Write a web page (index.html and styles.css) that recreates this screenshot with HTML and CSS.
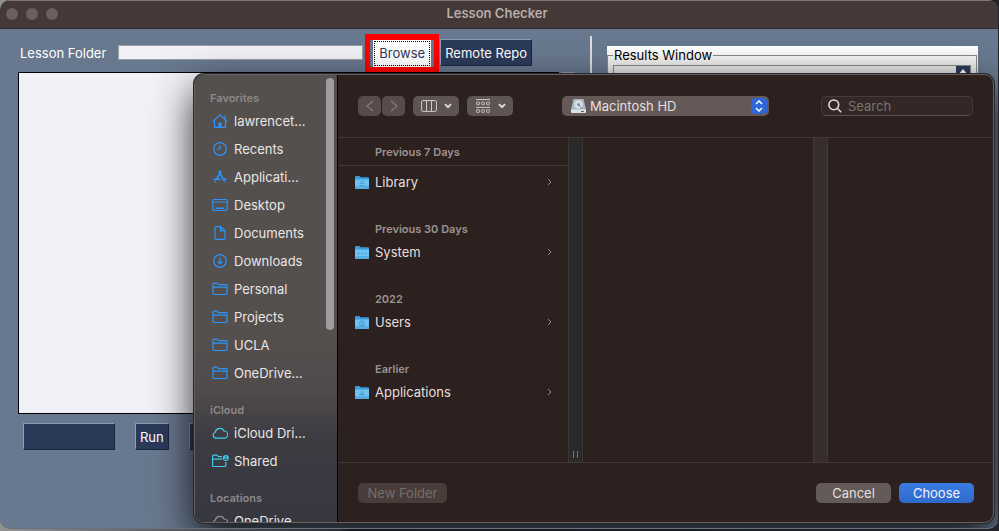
FILE: index.html
```html
<!DOCTYPE html>
<html lang="en">
<head>
<meta charset="utf-8">
<title>Lesson Checker</title>
<link rel="stylesheet" href="styles.css">
</head>
<body>
<svg class="sprite" aria-hidden="true">
  <symbol id="folder" viewBox="0 0 16 14"><path d="M1 11.5V2.2Q1 1.2 2 1.2h3l1.4 1.4H14q1 0 1 1v7.9q0 1-1 1H2q-1 0-1-1ZM1 5.2h14"/></symbol>
  <symbol id="cloud" viewBox="0 0 16 14"><path d="M3.8 12.2a3.1 3.1 0 0 1-.5-6A4.6 4.6 0 0 1 12 5a3.6 3.6 0 0 1 .3 7.2Z"/></symbol>
  <symbol id="blue-folder" viewBox="0 0 14 13"><path fill="#3a9bd8" d="M0 1q0-1 1-1h3.5l1.3 1.2H13q1 0 1 1V12H0Z"/><path fill="#6fc3f3" d="M0 3.4h14V12q0 1-1 1H1q-1 0-1-1Z"/><path fill="#55ade3" d="M0 10h14v2q0 1-1 1H1q-1 0-1-1Z"/></symbol>
</svg>

<div class="window">
  <header class="titlebar">
    <span class="lights"><i></i><i></i><i></i></span>
    <h1>Lesson Checker</h1>
  </header>

  <main class="app">
    <section class="lesson">
      <div class="path-row">
        <label for="path">Lesson Folder</label>
        <input id="path" class="path" type="text">
        <span class="highlight"><button class="tk browse" type="button">Browse</button></span>
        <button class="tk" type="button">Remote Repo</button>
      </div>
      <div class="list-row">
        <div class="list"></div>
        <div class="list-scroll"></div>
      </div>
      <div class="run-row">
        <button class="tk blank" type="button" aria-label="Status"></button>
        <button class="tk" type="button">Run</button>
        <button class="tk blank" type="button" aria-label="Clear"></button>
      </div>
    </section>
    <div class="separator"></div>
    <section class="results">
      <fieldset>
        <legend>Results Window</legend>
        <div class="output"><span class="output-up"><svg viewBox="0 0 10 6"><path d="M0 6 5 0l5 6Z"/></svg></span></div>
      </fieldset>
    </section>
  </main>

  <div class="dialog" role="dialog" aria-label="Choose folder">
    <nav class="sidebar">
      <div class="places">
        <h2>Favorites</h2>
        <a href="#"><svg viewBox="0 0 16 14"><path d="M.6 7.6 8 .9l7.4 6.7M2.5 6v7.4h11V6M12.8 5V1.8"/><path class="solid" d="M6.5 8.5h3v5h-3Z"/></svg>lawrencet...</a>
        <a href="#"><svg viewBox="0 0 16 14"><circle cx="8" cy="7" r="6.3"/><path d="M8 3.2V7H4.8"/></svg>Recents</a>
        <a href="#"><svg viewBox="0 0 16 14"><path class="bold" d="M9.2 1 4.6 9M6.8 1l5.9 10.8M1.4 9.2h7.4M11.6 9.2h3M3.6 10.8l-.8 1.6"/></svg>Applicati...</a>
        <a href="#"><svg viewBox="0 0 16 14"><rect x=".8" y="1.5" width="14.4" height="11" rx="1.2"/><path d="M1 4h14"/><path class="bold" d="M3.5 10.2h9"/></svg>Desktop</a>
        <a href="#"><svg viewBox="0 0 16 14"><path d="M3 1.7q0-1 1-1h4.7l4.3 4v7.6q0 1-1 1H4q-1 0-1-1ZM8.5.8v4.1H13"/></svg>Documents</a>
        <a href="#"><svg viewBox="0 0 16 14"><circle cx="8" cy="7" r="6.3"/><path d="M8 3.5v6.3M5.6 7.6 8 10l2.4-2.4"/></svg>Downloads</a>
        <a href="#"><svg><use href="#folder"/></svg>Personal</a>
        <a href="#"><svg><use href="#folder"/></svg>Projects</a>
        <a href="#"><svg><use href="#folder"/></svg>UCLA</a>
        <a href="#"><svg><use href="#folder"/></svg>OneDrive...</a>
        <h2>iCloud</h2>
        <a href="#" class="cyan"><svg><use href="#cloud"/></svg>iCloud Dri...</a>
        <a href="#" class="cyan"><svg viewBox="0 0 16 14"><path d="M10 2.6H6.4L5 1.2H1.5q-.9 0-.9 1v9.3q0 1 1 1h11.2q1 0 1-1V8M.6 5.2h9.6"/><circle class="solid" cx="13.8" cy="4" r="3"/><path class="cut" d="M13.8 2.2v1.2M12.4 5.2h2.8"/></svg>Shared</a>
        <h2>Locations</h2>
        <a href="#" class="gray"><svg><use href="#cloud"/></svg>OneDrive</a>
      </div>
      <div class="thumb"></div>
    </nav>

    <div class="browser">
      <div class="toolbar">
        <button type="button" class="tool nav" aria-label="Back"><svg class="arrow" viewBox="0 0 8 12"><path d="M7 1 1 6l6 5"/></svg></button>
        <button type="button" class="tool nav" aria-label="Forward"><svg class="arrow" viewBox="0 0 8 12"><path d="m1 1 6 5-6 5"/></svg></button>
        <button type="button" class="tool view" aria-label="Column view"><svg class="glyph" viewBox="0 0 16 12"><rect x=".6" y=".6" width="14.8" height="10.8" rx="1.2"/><path d="M5.5.6v10.8M10.5.6v10.8"/></svg><svg class="down" viewBox="0 0 8 6"><path d="m1 1.2 3 3 3-3"/></svg></button>
        <button type="button" class="tool view" aria-label="Group items"><svg class="glyph tall" viewBox="0 0 16 14"><path d="M1 .6h14M1 8.4h14"/><rect x="1.6" y="3" width="2.8" height="2.8" rx=".7"/><rect x="6.6" y="3" width="2.8" height="2.8" rx=".7"/><rect x="11.6" y="3" width="2.8" height="2.8" rx=".7"/><rect x="1.6" y="10.6" width="2.8" height="2.8" rx=".7"/><rect x="6.6" y="10.6" width="2.8" height="2.8" rx=".7"/><rect x="11.6" y="10.6" width="2.8" height="2.8" rx=".7"/></svg><svg class="down" viewBox="0 0 8 6"><path d="m1 1.2 3 3 3-3"/></svg></button>
        <div class="volume">
          <svg class="disk" viewBox="0 0 15 14"><path fill="#a9b8c2" d="M2.5 0h10L15 11H0Z"/><path fill="#dce3e7" d="M0 10.5h15V13q0 1-1 1H1q-1 0-1-1Z"/><circle cx="7.5" cy="5.5" r="4.3" fill="#d5e0e8"/><circle cx="7.5" cy="5.5" r="1.5" fill="#8196a5"/><path d="m8 6 3 4" stroke="#71828f"/><path fill="#58656d" d="M10 12h3v1h-3Z"/></svg>
          <select aria-label="Location"><option>Macintosh HD</option></select>
          <span class="stepper"><svg viewBox="0 0 8 12"><path d="m1 4 3-3 3 3M1 8l3 3 3-3"/></svg></span>
        </div>
        <div class="search">
          <svg viewBox="0 0 14 14"><circle cx="5.8" cy="5.8" r="4.9"/><path d="m9.2 9.2 4 4"/></svg>
          <input type="search" placeholder="Search" aria-label="Search">
        </div>
      </div>

      <div class="columns">
        <div class="column">
          <h3 class="first">Previous 7 Days</h3>
          <a href="#"><svg class="dir" viewBox="0 0 14 13"><use href="#blue-folder"/><path d="M4.5 5.5h5M4.5 7.5h5M4.5 9.5h5"/></svg>Library<svg class="more" viewBox="0 0 5 8"><path d="m1 1 3 3-3 3"/></svg></a>
          <h3>Previous 30 Days</h3>
          <a href="#"><svg class="dir" viewBox="0 0 14 13"><use href="#blue-folder"/><path d="M2 7.5h3M6 7.5h2M9 7.5h3"/></svg>System<svg class="more" viewBox="0 0 5 8"><path d="m1 1 3 3-3 3"/></svg></a>
          <h3>2022</h3>
          <a href="#"><svg class="dir" viewBox="0 0 14 13"><use href="#blue-folder"/><circle cx="7" cy="7.5" r="2.7"/><circle cx="7" cy="7" r=".6"/><path d="M5.5 9.2h3"/></svg>Users<svg class="more" viewBox="0 0 5 8"><path d="m1 1 3 3-3 3"/></svg></a>
          <h3>Earlier</h3>
          <a href="#"><svg class="dir" viewBox="0 0 14 13"><use href="#blue-folder"/><path d="M7.3 5 5 9.5M6.7 5 9 9.5M4 8.5h6"/></svg>Applications<svg class="more" viewBox="0 0 5 8"><path d="m1 1 3 3-3 3"/></svg></a>
        </div>
        <div class="divider grip"><i></i><i></i></div>
        <div class="column"></div>
        <div class="divider warm"></div>
        <div class="column last"></div>
      </div>

      <footer class="actions">
        <button type="button" class="push new" disabled>New Folder</button>
        <button type="button" class="push cancel">Cancel</button>
        <button type="button" class="push choose">Choose</button>
      </footer>
    </div>
  </div>
</div>
</body>
</html>
```

FILE: styles.css
```css
* { box-sizing: border-box; }
body {
  margin: 0;
  height: 100vh;
  overflow: hidden;
  background: linear-gradient(90deg, #929292, #555 19%, #2b2b2b 34%, #17191c 35%, #24242c);
  font: 13px/16px Inter, "Liberation Sans", sans-serif;
  color: #fff;
}
button, input, select { font: inherit; color: inherit; margin: 0; }
h1, h2, h3 { margin: 0; font-weight: 600; }
a { color: inherit; text-decoration: none; }
svg { display: block; fill: none; stroke: currentColor; flex: none; }
.sprite { position: absolute; width: 0; height: 0; }

.window {
  position: relative;
  display: flex;
  flex-direction: column;
  height: calc(100vh - 2px);
  margin-right: 1px;
  border-radius: 10px;
  overflow: hidden;
  background: #68788e;
  border-bottom: 1px solid #66727f;
}
.titlebar {
  position: relative;
  height: 29px;
  flex: none;
  padding-right: 4px;
  background: #443936;
  border-top: 1px solid #7c7774;
  border-bottom: 1px solid #2b2e36;
}
.titlebar h1 { font-size: 13px; line-height: 25px; text-align: center; color: #b7adaa; }
.lights { position: absolute; left: 6px; top: 7px; display: flex; gap: 8px; }
.lights i { width: 12px; height: 12px; border-radius: 50%; background: #6a5f5d; }

.app { flex: 1; min-height: 0; display: flex; padding: 4px 20px 20px 18px; }
.lesson { flex: 557; display: flex; flex-direction: column; }
.path-row { display: flex; align-items: center; height: 39px; padding: 0 43px 0 2px; }
.path {
  flex: 1;
  min-width: 0;
  height: 15px;
  margin-left: 12px;
  padding: 0 2px;
  border: 1px solid #9a9fa6;
  background: #f0f1f6;
  color: #222;
}
.highlight { margin: 0 1px 0 2px; padding: 0 3px; border: 6px solid #f00; border-width: 6px 5px 5px; }
.tk {
  height: 27px;
  padding: 0 4px;
  border: 1px solid #1a2540;
  border-color: #8d9bb3 #1a2540 #1a2540 #8d9bb3;
  background: #2c3a5a;
}
.tk.browse { display: block; padding: 0 5px; border-color: #fff; background: #fff; color: #2c3a5a; outline: 1px dotted #000; outline-offset: -2px; }
.list-row { display: flex; gap: 2px; height: 342px; }
.list { flex: 1; border: 1px solid #000; background: #f1f2f7; }
.list-scroll { width: 14px; background: #2c3a5a; border: 1px solid #9a9fa6; }
.run-row { display: flex; gap: 20px; padding: 9px 0 0 5px; }
.blank { width: 92px; }
.separator { width: 2px; margin: 3px 15px 0; background: #dcdcdc; }
.results { flex: 371; margin-top: 13px; background: linear-gradient(#fff, #ddd 30px); color: #000; }
.results fieldset { margin: 1px 1px 0 0; padding: 2px 5px; border: 1px solid #888; height: 400px; min-width: 0; }
.results legend { padding: 0 1px; margin-left: 0; }
.output { height: 360px; border: 1px solid #888; display: flex; justify-content: flex-end; }
.output-up { width: 14px; height: 14px; padding: 3px 2px; background: #2c3a5a; }
.output-up svg { width: 10px; height: 6px; fill: #fff; stroke: none; }

.dialog {
  position: absolute;
  inset: 74px 4px 5px 194px;
  display: flex;
  overflow: hidden;
  border: 1px solid #66605f;
  border-radius: 10px;
  background: #2c211f;
  box-shadow: 0 0 0 1px #25282e, 0 16px 40px rgba(0, 0, 0, .85);
}
.sidebar {
  position: relative;
  width: 143px;
  flex: none;
  border-right: 1px solid #000;
  background: linear-gradient(#54504e 0 58%, #504b4b 70%, #3c3b42 82%, #373740);
  color: #e9e6e5;
}
.places h2 { height: 32px; padding: 14px 0 0 15px; font-size: 11px; line-height: 18px; color: #8d8988; }
.places a { display: flex; align-items: center; gap: 6px; height: 28px; padding-left: 17px; white-space: nowrap; }
.places svg { width: 16px; height: 14px; color: #2b95fb; overflow: visible; stroke-width: 1.2; }
.places .cyan svg { color: #3dccec; }
.places .gray svg { color: #929094; }
.places .solid { fill: currentColor; stroke: none; }
.places .bold { stroke-width: 1.6; }
.places .cut { stroke: #3a3a41; }
.thumb { position: absolute; top: 3px; right: 3px; width: 8px; height: 252px; border-radius: 4px; background: #a09b9c; }

.browser { flex: 1; min-width: 0; display: flex; flex-direction: column; color: #e4dfde; }
.toolbar { display: flex; align-items: center; height: 63px; padding: 0 20px; border-bottom: 1px solid #443937; }
.tool { display: flex; align-items: center; justify-content: center; height: 20px; padding: 0; border: 0; border-radius: 5px; background: #5e5452; }
.nav { width: 23px; margin-right: 1px; background: #574c4a; color: #857b79; }
.view { width: 46px; gap: 7px; margin-left: 8px; }
.nav + .view { margin-left: 7px; }
.arrow { width: 8px; height: 12px; stroke-width: 1.3; }
.glyph { width: 16px; height: 12px; color: #d0c9c7; }
.glyph.tall { height: 14px; }
.down { width: 8px; height: 6px; stroke-width: 1.7; }
.volume { position: relative; width: 207px; height: 20px; margin: 0 auto 0 49px; }
.volume select { appearance: none; width: 100%; height: 20px; padding: 0 28px; border: 0; border-radius: 5px; background: #645957; }
.disk { position: absolute; left: 9px; top: 3px; width: 15px; height: 14px; stroke: none; }
.stepper { position: absolute; right: 2px; top: 2px; width: 16px; height: 16px; padding: 2px 4px; border-radius: 4px; background: #2f66da; color: #fff; pointer-events: none; }
.stepper svg { width: 8px; height: 12px; stroke-width: 1.5; }
.search { display: flex; align-items: center; gap: 6px; width: 152px; height: 20px; padding: 0 6px; border: 1px solid #453a38; border-bottom-color: #5c514f; border-radius: 5px; background: #332826; }
.search svg { width: 14px; height: 14px; stroke-width: 1.5; }
.search input { flex: 1; min-width: 0; padding: 0; border: 0; background: none; outline: 0; }
.search input::placeholder { color: #7b7270; opacity: 1; }

.columns { flex: 1; display: flex; }
.column { flex: 230; min-width: 0; }
.column.last { flex: 165; }
.column h3 { margin-top: 24px; padding-left: 37px; font-size: 11px; line-height: 24px; color: #9c9391; }
.column h3.first { margin: 0 0 5px; padding-top: 1px; line-height: 26px; border-bottom: 1px solid #443937; }
.column a { display: flex; align-items: center; height: 22px; padding: 0 16px 0 17px; }
.dir { width: 14px; height: 13px; margin-right: 6px; stroke: none; }
.dir > path, .dir > circle { stroke: #3b87bd; stroke-opacity: .6; }
.more { width: 5px; height: 8px; margin-left: auto; color: #918886; }
.divider { display: flex; align-items: flex-end; justify-content: center; gap: 3px; width: 15px; flex: none; padding-bottom: 4px; border: 1px solid #373635; border-width: 0 1px; background: #2a2a2a; }
.divider i { width: 1px; height: 7px; background: #777; }
.divider.warm { background: #382e2c; border-color: #443a38; }
.actions { display: flex; align-items: center; gap: 8px; height: 60px; padding: 0 19px 0 20px; border-top: 1px solid #443937; }
.push { width: 75px; height: 20px; padding: 0; border: 0; border-radius: 5px; background: #645a58; line-height: 20px; }
.push.new { width: 89px; margin-right: auto; background: #483d3b; color: #776d6b; }
.push.choose { background: linear-gradient(#3b7ce2, #2f69cc); color: #eef3fc; }
```
